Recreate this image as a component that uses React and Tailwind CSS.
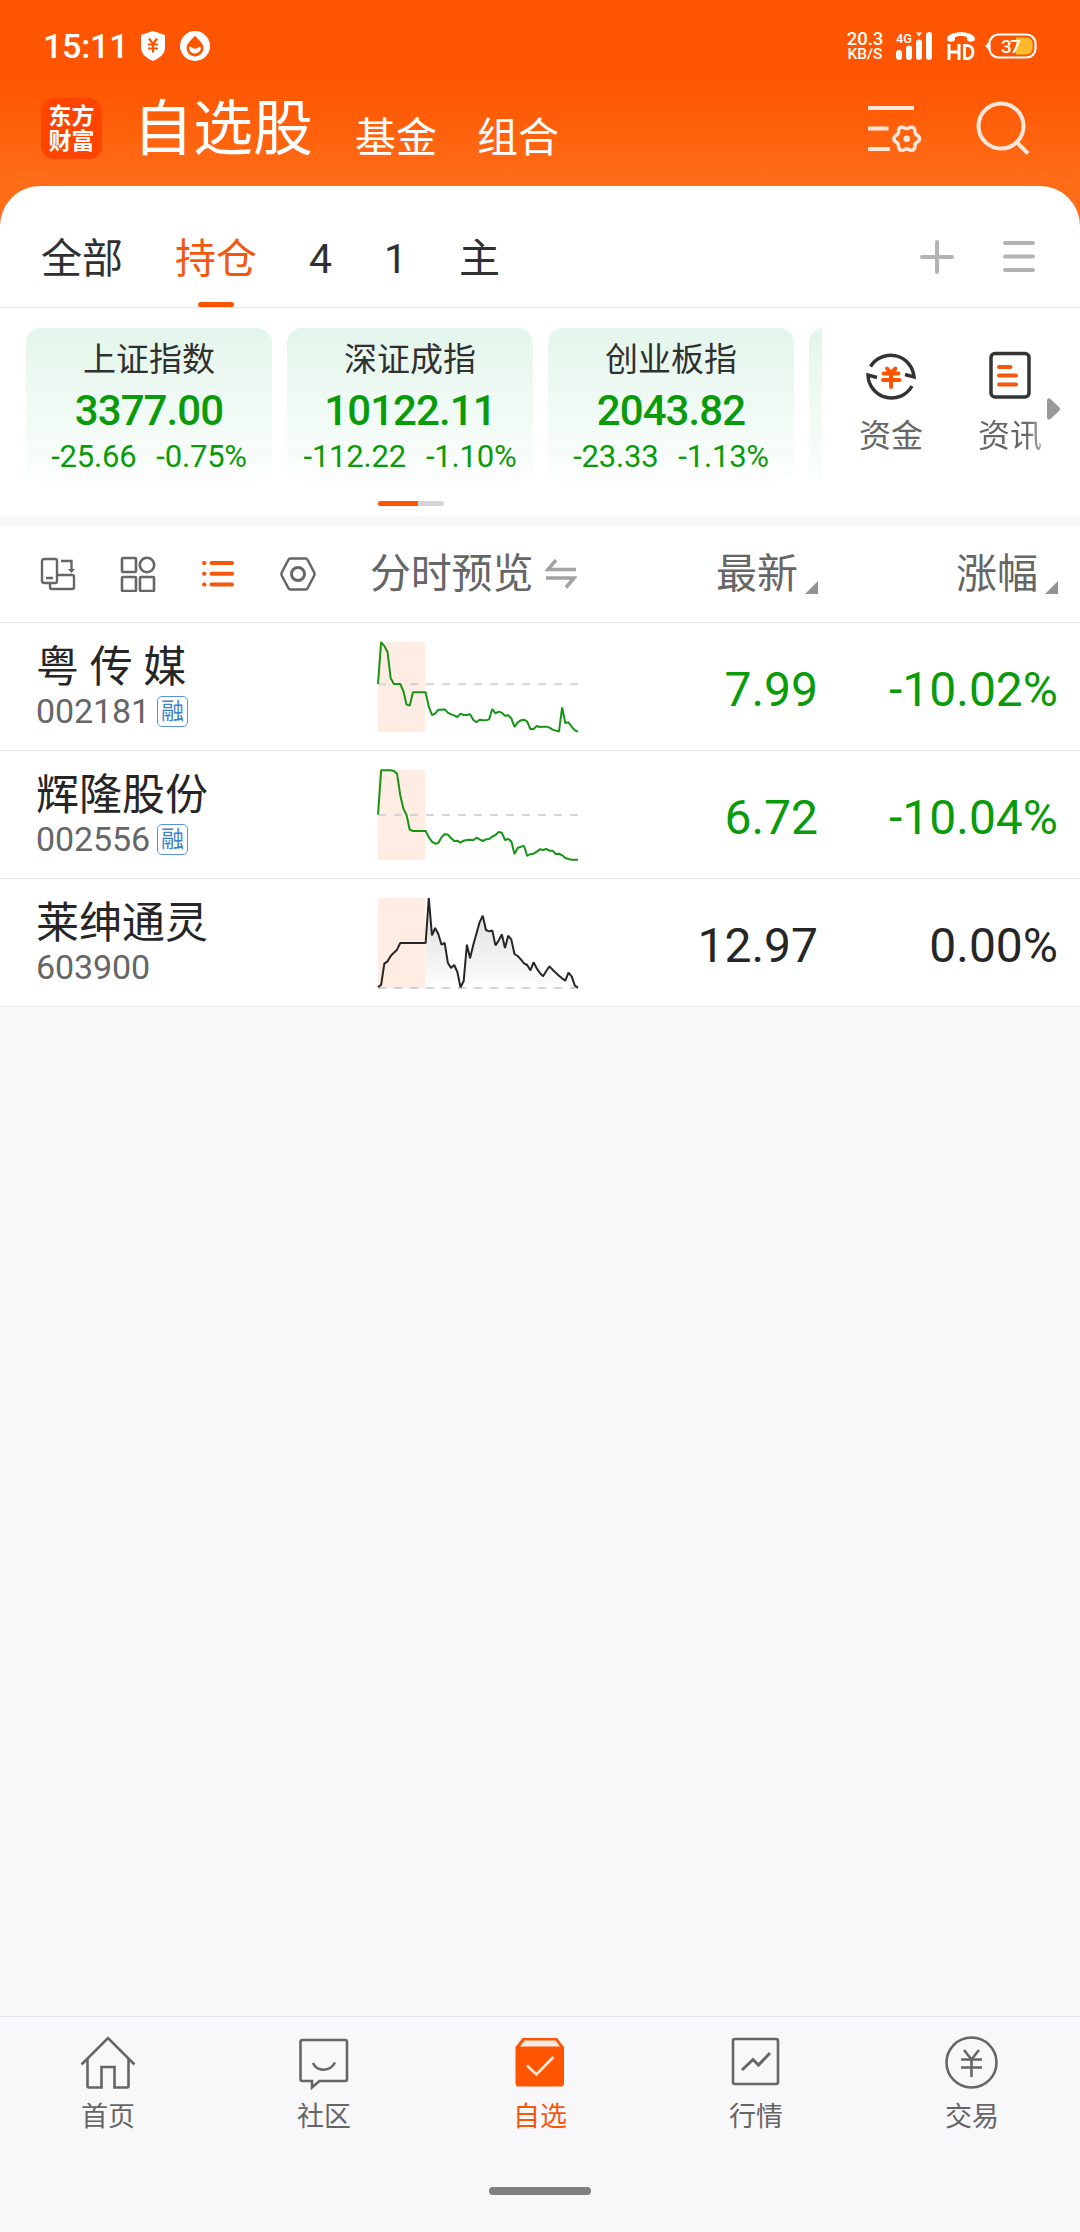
const indices = [
  { name: '上证指数', value: '3377.00', change: '-25.66', percent: '-0.75%' },
  { name: '深证成指', value: '10122.11', change: '-112.22', percent: '-1.10%' },
  { name: '创业板指', value: '2043.82', change: '-23.33', percent: '-1.13%' },
]

const stocks = [
  {
    name: '粤 传 媒',
    code: '002181',
    margin: true,
    price: '7.99',
    percent: '-10.02%',
    color: 'text-[#0a9b0a]',
    stroke: '#169416',
    base: 127,
    points: [126, 0, 12, 30, 109, 126, 126, 126, 147, 188, 191, 151, 151, 151, 151, 151, 194, 219, 215, 203, 203, 202, 212, 217, 220, 225, 215, 219, 219, 217, 233, 241, 233, 235, 235, 232, 201, 214, 209, 212, 221, 220, 229, 255, 241, 235, 233, 239, 261, 261, 252, 255, 254, 254, 257, 263, 266, 269, 196, 243, 241, 254, 265, 269],
  },
  {
    name: '辉隆股份',
    code: '002556',
    margin: true,
    price: '6.72',
    percent: '-10.04%',
    color: 'text-[#0a9b0a]',
    stroke: '#169416',
    base: 135,
    points: [134, 1, 1, 1, 1, 3, 11, 75, 116, 135, 179, 183, 183, 183, 183, 183, 202, 215, 221, 219, 202, 192, 194, 204, 213, 212, 218, 212, 210, 209, 211, 203, 208, 213, 208, 207, 200, 195, 186, 188, 210, 207, 214, 252, 234, 230, 228, 258, 252, 251, 245, 238, 240, 237, 242, 242, 252, 251, 256, 264, 267, 269, 269, 269],
  },
  {
    name: '莱绅通灵',
    code: '603900',
    margin: false,
    price: '12.97',
    percent: '0.00%',
    color: 'text-[#262626]',
    stroke: '#262626',
    base: 270,
    points: [268, 260, 197, 190, 174, 164, 155, 135, 135, 135, 135, 135, 135, 135, 135, 135, 0, 112, 90, 108, 140, 135, 194, 210, 201, 222, 268, 249, 140, 181, 141, 107, 73, 53, 96, 100, 97, 142, 128, 109, 150, 113, 125, 168, 174, 184, 196, 201, 217, 193, 211, 225, 235, 219, 205, 215, 224, 233, 241, 248, 224, 235, 263, 269],
  },
]

// six-lobed outline of the settings gear
const gearPoints = Array.from({ length: 72 }, (_, i) => {
  const angle = (i * Math.PI) / 36
  const r = 11.5 + 1.4 * Math.cos(6 * angle)
  return `${(38.7 + r * Math.cos(angle)).toFixed(2)},${(34.7 + r * Math.sin(angle)).toFixed(2)}`
}).join(' ')

const StatusBar = () => (
  <div className="flex h-[92px] items-center justify-between pl-[43px] pr-[42px] text-white">
    <div className="flex items-center">
      <span className="w-[97px] text-[34px] font-medium leading-none tracking-[-0.2px]">15:11</span>
      <svg width="26" height="30" viewBox="0 0 26 30">
        <path d="M13 0 L25 4 V16 C25 23 20 27 13 30 C6 27 1 23 1 16 V4 Z" fill="#fff" />
        <path d="M9 7.5 L13 13 L17 7.5 M8 13.5 H18 M8 17.5 H18 M13 13 V21.5" fill="none" stroke="#ff5500" strokeWidth="2.200" />
      </svg>
      <svg className="ml-3.5" width="30" height="30" viewBox="0 0 30 30">
        <circle cx="15" cy="15" r="15" fill="#fff" />
        <path d="M15 4.500 C17 7.500 23.500 12 23.500 17 A8.500 8.500 0 0 1 6.500 17 C6.500 12 13 7.500 15 4.500 Z" fill="#ff5500" />
        <path d="M9 16 C11 14.500 13.500 19 16.500 17.500 C18.500 16 20 15.500 21 17 A6 6 0 0 1 9 16 Z" fill="#fff" />
      </svg>
    </div>
    <div className="flex items-center">
      <div className="flex w-[38px] flex-col items-center font-medium">
        <span className="text-[18.5px] leading-4">20.3</span>
        <span className="text-[15.5px] leading-[15px]">KB/S</span>
      </div>
      <svg className="ml-3 overflow-visible" width="38" height="28" viewBox="0 0 38 28" fill="#fff">
        <text x="0" y="11" fontSize="13.500" fontWeight="500" textLength="16" lengthAdjust="spacingAndGlyphs">4G</text>
        <rect x="0" y="18" width="6" height="10" rx="3" />
        <rect x="10" y="13.500" width="6" height="14.500" rx="3" />
        <rect x="20" y="7.500" width="6" height="20.500" rx="3" />
        <rect x="30" y="0" width="6" height="28" rx="3" />
        <path d="M20 0.500 H26 L23 4.500 Z" />
      </svg>
      <svg className="ml-3" width="30" height="28" viewBox="0 0 30 28">
        <path d="M1 7 C1 -2 29 -2 29 7 C29 10.500 22 10.500 21 7.500 V5 C18 3.500 12 3.500 9 5 V7.500 C8 10.500 1 10.500 1 7 Z" fill="#fff" />
        <path d="M3 12 V28 M13 12 V28 M3 20 H13" stroke="#fff" strokeWidth="3" />
        <path d="M18.500 13.500 H21 C29 13.500 29 26.500 21 26.500 H18.500 Z" fill="none" stroke="#fff" strokeWidth="3" />
      </svg>
      <svg className="ml-[9px]" width="53" height="26" viewBox="0 0 53 26">
        <rect x="4.500" y="1.500" width="46" height="23" rx="9" fill="none" stroke="#fff" strokeWidth="2.200" />
        <path d="M4 9 L0 13 L4 17 Z" fill="#fff" />
        <path d="M31 4.500 H41 Q47.500 4.500 47.500 11 V15 Q47.500 21.500 41 21.500 H31 Z" fill="#ffb92b" />
        <text x="16" y="19.500" fontSize="19" fontWeight="500" fill="#fff" textLength="20">37</text>
      </svg>
    </div>
  </div>
)

const Header = () => (
  <div className="flex h-[94px] items-start justify-between pl-[41px] pr-[49px] text-white">
    <div className="flex items-start">
      <div className="mt-1.5 flex h-[61px] w-[61px] flex-col items-center justify-center rounded-[13px] bg-[#ff4400] text-[23px] font-bold leading-[25px]">
        <span>东方</span>
        <span>财富</span>
      </div>
      <span className="ml-[31px] mt-[3px] text-[60px] leading-[70px]">自选股</span>
      <span className="ml-[42px] mt-4 text-[41px] leading-[60px]">基金</span>
      <span className="ml-[40px] mt-4 text-[41px] leading-[60px]">组合</span>
    </div>
    <div className="flex items-start">
      <svg className="mt-3" width="56" height="52" viewBox="0 0 56 52" fill="none" stroke="#ffe6d8" strokeWidth="4">
        <path d="M0 4 H46 M0 24.500 H20.500 M0 45 H22" />
        <polygon points={gearPoints} strokeWidth="3.500" />
        <circle cx="38.700" cy="34.700" r="3.300" fill="#ffe6d8" stroke="none" />
      </svg>
      <svg className="ml-[52px] mt-[9px]" width="55" height="55" viewBox="0 0 55 55" fill="none" stroke="#ffe6d8" strokeWidth="4">
        <circle cx="25" cy="25" r="22.500" />
        <path d="M40.500 41 L52 52.500" />
      </svg>
    </div>
  </div>
)

const Tabs = () => (
  <div className="flex h-[122px] items-stretch border-b border-[#e4e4e6] pl-[41px] pr-[44px] text-[41px] leading-[60px] text-[#303030]">
    <span className="mt-[43px]">全部</span>
    <div className="ml-[52px] flex flex-col items-center pt-[43px] text-[#f5580d]">
      <span>持仓</span>
      <div className="mt-[13px] h-[5px] w-9 rounded-full bg-[#ff5500]" />
    </div>
    <span className="ml-[52px] mt-[43px]">4</span>
    <span className="ml-[52px] mt-[43px]">1</span>
    <span className="ml-[52px] mt-[43px]">主</span>
    <div className="ml-auto flex items-start pt-[53px]">
      <svg width="36" height="36" viewBox="0 0 36 36" stroke="#b3b3b3" strokeWidth="4" strokeLinecap="round">
        <path d="M3 18 H33 M18 3 V33" />
      </svg>
      <svg className="ml-[47px]" width="34" height="36" viewBox="0 0 34 36" stroke="#b3b3b3" strokeWidth="4" strokeLinecap="round">
        <path d="M3 4 H31 M3 17.500 H31 M3 31 H31" />
      </svg>
    </div>
  </div>
)

const IndexStrip = () => (
  <div className="flex h-[208px] pl-[26px]">
    <div className="flex w-[796px] flex-col items-center pt-5">
      <div className="flex w-full gap-[15px] overflow-hidden">
        {indices.map((item) => (
          <div key={item.name} className="flex h-[153px] w-[246px] shrink-0 flex-col items-center rounded-[15px] bg-linear-to-b from-[#e3f6eb] to-[#fcfefd] pt-[11px] text-[#0a9b0a]">
            <span className="text-[33px] leading-[42px] text-[#303030]">{item.name}</span>
            <span className="mt-[5px] text-[42px] font-medium leading-[50px] tracking-[-0.9px]">{item.value}</span>
            <div className="mt-[3px] flex gap-5 text-[31px] leading-[36px] tracking-[-0.2px]">
              <span>{item.change}</span>
              <span>{item.percent}</span>
            </div>
          </div>
        ))}
        <div className="h-[153px] w-[246px] shrink-0 rounded-[15px] bg-linear-to-b from-[#e3f6eb] to-[#fcfefd]" />
      </div>
      <div className="-ml-[26px] mt-5 flex h-[5px] w-[66px] overflow-hidden rounded-full bg-[#d2d5da]">
        <div className="w-10 bg-[#ff5500]" />
      </div>
    </div>
    <div className="ml-[37px] flex items-start pt-[41px] text-[32px] leading-[44px] text-[#666]">
      <div className="flex flex-col items-center">
        <svg width="52" height="52" viewBox="0 0 52 52" fill="none" stroke="#333" strokeWidth="3.500">
          <path d="M5.500 17.500 A23.500 23.500 0 0 1 49 28 L40 25.500" />
          <path d="M47 37 A23.500 23.500 0 0 1 3 26 L12 28.500" />
          <path d="M22 19.500 L26 24 L30.500 19.500 M18.500 24.500 H33.500 M18 31 H34.500 M26 25 V38" stroke="#ff5500" strokeWidth="4" strokeLinecap="round" />
        </svg>
        <span className="mt-[13px]">资金</span>
      </div>
      <div className="ml-[55px] flex flex-col items-center">
        <svg width="52" height="52" viewBox="0 0 52 52" fill="none" stroke="#333" strokeWidth="3.500">
          <rect x="7" y="4.500" width="38" height="43.500" rx="4" />
          <path d="M15 18 H26.500 M15 26.500 H32 M15 35.500 H32" stroke="#f5580d" strokeWidth="4" strokeLinecap="round" />
        </svg>
        <span className="mt-[13px] bg-linear-to-r from-[#666] from-75% to-[#aaa] bg-clip-text text-transparent">资讯</span>
      </div>
      <svg className="ml-[5px] mt-[49px]" width="14" height="22" viewBox="0 0 14 22" fill="#999">
        <path d="M0 2 Q1 -1 4 1.500 L12 9 Q14 11 12 13 L4 20.500 Q1 23 0 20 Z" />
      </svg>
    </div>
  </div>
)

const Toolbar = () => (
  <div className="flex h-[97px] items-center border-b border-[#e8e8ea] pl-10 pr-[22px] text-[41px] text-[#666]">
    <svg width="36" height="36" viewBox="0 0 36 36" fill="none" stroke="#666" strokeWidth="2.400">
      <rect x="2" y="3" width="15" height="24" rx="2" />
      <path d="M17 19 H32 Q34 19 34 21 V31 Q34 33 32 33 H12 Q10 33 10 31 V27 M6 22 H13 M21 5 H31.500 V14" />
      <path d="M28 13 H35 L31.500 17 Z" fill="#666" stroke="none" />
    </svg>
    <svg className="ml-11" width="36" height="36" viewBox="0 0 36 36" fill="none" stroke="#666" strokeWidth="2.600">
      <rect x="2" y="2" width="14" height="14" rx="1" />
      <ellipse cx="27" cy="9" rx="7.200" ry="7.200" />
      <rect x="2" y="21" width="14" height="14" rx="1" />
      <rect x="20" y="21" width="14" height="14" rx="1" />
    </svg>
    <svg className="ml-[45px]" width="36" height="36" viewBox="0 0 36 36" stroke="#f5580d" strokeWidth="4" strokeLinecap="round">
      <path d="M3 7 H3.500 M10.500 7 H31 M3 17.800 H3.500 M10.500 17.800 H31 M3 28.500 H3.500 M10.500 28.500 H31" />
    </svg>
    <svg className="ml-[43px]" width="36" height="36" viewBox="0 0 36 36" fill="none" stroke="#666" strokeWidth="2.500">
      <path d="M10.500 2.500 H25.500 Q27 2.500 27.700 4 L34 16 Q35 18 34 20 L27.700 32 Q27 33.500 25.500 33.500 H10.500 Q9 33.500 8.300 32 L2 20 Q1 18 2 16 L8.300 4 Q9 2.500 10.500 2.500 Z" />
      <circle cx="18" cy="18" r="6.500" strokeWidth="3" />
    </svg>
    <span className="ml-[54px] pt-[2px] tracking-[-0.2px]">分时预览</span>
    <svg className="ml-3" width="32" height="30" viewBox="0 0 32 30" fill="none" stroke="#a3a3a3" strokeWidth="3.500">
      <path d="M11 1 L3 10.500 H31 M1 19 H29 L21 28.500" />
    </svg>
    <div className="ml-auto flex items-end pt-[2px]">
      <span>最新</span>
      <svg className="mb-3 ml-[7px]" width="13" height="13" viewBox="0 0 13 13">
        <path d="M13 0 V13 H0 Z" fill="#919196" />
      </svg>
    </div>
    <div className="flex w-60 items-end justify-end pt-[2px]">
      <span>涨幅</span>
      <svg className="mb-3 ml-[7px]" width="13" height="13" viewBox="0 0 13 13">
        <path d="M13 0 V13 H0 Z" fill="#919196" />
      </svg>
    </div>
  </div>
)

const Sparkline = ({ id, points, base, stroke }) => {
  const coords = points.map((y, i) => [((i * 600) / (points.length - 1)).toFixed(1), y])
  const line = coords.map((p) => p.join(',')).join(' ')
  // only the part after the shaded morning block is filled
  const area = `143,270 ${coords.slice(15).map((p) => p.join(',')).join(' ')} 600,270`

  return (
    <svg className="overflow-visible" width="200" height="90" viewBox="0 0 600 270" fill="none">
      <defs>
        <linearGradient id={id} x1="0" y1="0" x2="0" y2="1">
          <stop offset="0" stopColor={stroke} stopOpacity={base === 270 ? 0.16 : 0.02} />
          <stop offset="1" stopColor={stroke} stopOpacity="0.01" />
        </linearGradient>
      </defs>
      <rect width="141" height="270" fill="#ffede4" />
      <polygon points={area} fill={`url(#${id})`} />
      <path d={`M0 ${base} H600`} stroke="#d2d4d8" strokeWidth="6" strokeDasharray="24 24" />
      <polyline points={line} stroke={stroke} strokeWidth="6" strokeLinejoin="bevel" />
    </svg>
  )
}

const StockRow = ({ stock }) => (
  <div className="flex h-32 items-center border-b border-[#e8e8ea] bg-white pl-9 pr-[22px]">
    <div className="flex h-full w-[342px] flex-col pt-[17px]">
      <span className="h-[52px] text-[43px] leading-[54px] text-[#262626]">{stock.name}</span>
      <div className="flex h-[38px] items-center">
        <span className="text-[34px] leading-[38px] tracking-[-0.1px] text-[#666]">{stock.code}</span>
        {stock.margin && (
          <span className="ml-[7px] flex h-[31px] w-[31px] items-center justify-center rounded-[5px] border-[1.5px] border-[#5b93d3] text-[23px] leading-none text-[#3f7fc8]">融</span>
        )}
      </div>
    </div>
    <Sparkline id={`fill-${stock.code}`} points={stock.points} base={stock.base} stroke={stock.stroke} />
    <span className={`ml-auto pt-1.5 text-[48px] ${stock.color}`}>{stock.price}</span>
    <span className={`w-60 pt-1.5 text-right text-[48px] ${stock.color}`}>{stock.percent}</span>
  </div>
)

const navItems = [
  {
    label: '首页',
    icon: (
      <path d="M1.500 29.500 L28 3 L54.500 29.500 M7.500 24 V51 Q7.500 52.500 9 52.500 H21.500 V32 H34.500 V52.500 H47 Q48.500 52.500 48.500 51 V24" />
    ),
  },
  {
    label: '社区',
    icon: (
      <>
        <path d="M6.500 5 H49 Q51 5 51 7 V44 Q51 46 49 46 H23.500 L16 52.500 V46 H6.500 Q4.500 46 4.500 44 V7 Q4.500 5 6.500 5 Z" />
        <path d="M17 28 C21 37 34 37 39 27.500" />
      </>
    ),
  },
  {
    label: '自选',
    active: true,
    icon: (
      <>
        <path d="M10.500 3 H45 L52 12 V48 Q52 51.500 49 51.500 H6.500 Q3.500 51.500 3.500 48 V12 Z" fill="#ff5500" stroke="none" />
        <path d="M12.500 5.500 H43.500 L48 11.500 H8 Z" fill="#f9e9e4" stroke="none" />
        <path d="M15 30.500 L24.500 39.500 L41.500 22" stroke="#ffe9de" />
      </>
    ),
  },
  {
    label: '行情',
    icon: (
      <>
        <rect x="5" y="4" width="45" height="45" rx="2" />
        <path d="M14 35 L25 24.500 L30.500 30 L42 18" strokeWidth="3" />
      </>
    ),
  },
  {
    label: '交易',
    icon: (
      <>
        <circle cx="27.500" cy="27.500" r="25" />
        <path d="M20 15 L27.500 24.500 L35 15 M17 24.500 H38 M17 32.500 H38 M27.500 24.500 V42" />
      </>
    ),
  },
]

const BottomNav = () => (
  <div className="mt-auto flex h-[216px] flex-col border-t border-[#e2e3e6] bg-[#f8f8fb]">
    <div className="flex pt-[18px]">
      {navItems.map((item) => (
        <div key={item.label} className={`flex flex-1 flex-col items-center text-[27px] leading-[36px] ${item.active ? 'text-[#f5580d]' : 'text-[#666]'}`}>
          <svg width="56" height="56" viewBox="0 0 56 56" fill="none" stroke="#666" strokeWidth="2.600">
            {item.icon}
          </svg>
          <span className="mt-2">{item.label}</span>
        </div>
      ))}
    </div>
    <div className="mx-auto mt-[52px] h-2 w-[102px] rounded-full bg-[#808080]" />
  </div>
)

const App = () => {
  return (
    <div className="flex h-[2232px] w-[1080px] flex-col overflow-hidden bg-[#f7f8fa] font-['Roboto','Noto_Sans_CJK_SC',sans-serif]" lang="zh-CN">
      <div className="bg-[linear-gradient(to_bottom,#ff5500_80px,#ff6d18_180px)]">
        <StatusBar />
        <Header />
        <div className="rounded-t-[40px] bg-white">
          <Tabs />
          <IndexStrip />
        </div>
      </div>
      <div className="mt-2.5 bg-white">
        <Toolbar />
        {stocks.map((stock) => (
          <StockRow key={stock.code} stock={stock} />
        ))}
      </div>
      <BottomNav />
    </div>
  )
}

export default App
